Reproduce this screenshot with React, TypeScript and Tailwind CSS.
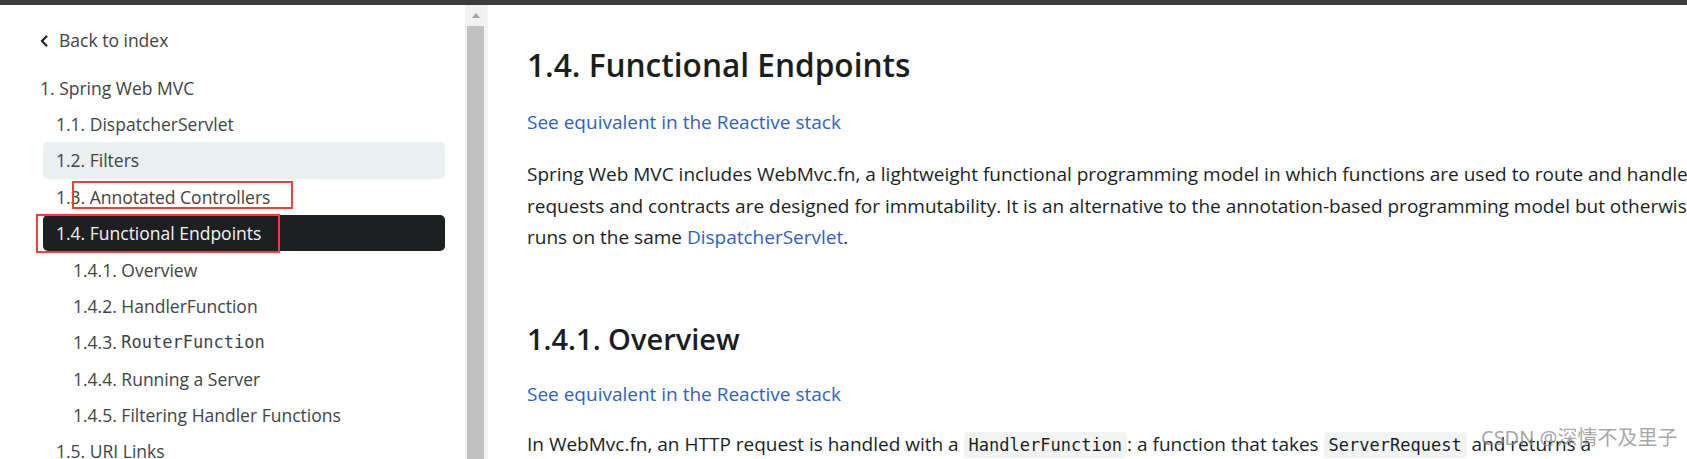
export default function App() {
  const mono = "font-['DejaVu_Sans_Mono',monospace]";
  return (
    <div className="relative w-[1687px] h-[459px] overflow-hidden bg-white font-['Open_Sans',sans-serif] flex flex-col">
      <div className="h-[5px] shrink-0 bg-[#3c3c3c]" />
      <div className="flex flex-1 min-h-0">
        <aside className="w-[465px] shrink-0 pt-[17.5px] text-[17.5px] text-[#3e4444]">
          <div className="h-9 flex items-center pl-[40px] gap-[11px]">
            <svg width="9" height="14" viewBox="0 0 9 14">
              <path d="M7 1.8 L2 7 L7 12.2" fill="none" stroke="#1d2222" strokeWidth="2.2" />
            </svg>
            <span className="-ml-[1px]">Back to index</span>
          </div>
          <div className="mt-[11px] flex flex-col">
            <div className="h-[36.4px] flex items-center pl-[40px]">1. Spring Web MVC</div>
            <div className="h-[36.4px] flex items-center ml-[43px] w-[402px] pl-[13px]">1.1. DispatcherServlet</div>
            <div className="h-[36.4px] flex items-center ml-[43px] w-[402px] pl-[13px] rounded-[5px] bg-[#e8f0f0]">1.2. Filters</div>
            <div className="h-[36.4px] flex items-center ml-[43px] w-[402px] pl-[13px]">1.3. Annotated Controllers</div>
            <div className="h-[36.4px] flex items-center ml-[43px] w-[402px] pl-[13px] rounded-[5px] bg-[#1c2020] text-[#f4f4f4]">1.4. Functional Endpoints</div>
            <div className="h-[36.4px] flex items-center ml-[43px] w-[402px] pl-[30px]">1.4.1. Overview</div>
            <div className="h-[36.4px] flex items-center ml-[43px] w-[402px] pl-[30px]">1.4.2. HandlerFunction</div>
            <div className="h-[36.4px] flex items-center ml-[43px] w-[402px] pl-[30px] whitespace-pre">
              1.4.3. <span className={`${mono} text-[17px]`}>RouterFunction</span>
            </div>
            <div className="h-[36.4px] flex items-center ml-[43px] w-[402px] pl-[30px]">1.4.4. Running a Server</div>
            <div className="h-[36.4px] flex items-center ml-[43px] w-[402px] pl-[30px]">1.4.5. Filtering Handler Functions</div>
            <div className="h-[36.4px] flex items-center ml-[43px] w-[402px] pl-[13px]">1.5. URI Links</div>
          </div>
        </aside>
        <div className="w-[21px] shrink-0 bg-[#f1f1f1] flex flex-col items-center">
          <div className="h-[21px] w-full flex items-center justify-center">
            <div className="w-0 h-0 border-l-[4.5px] border-r-[4.5px] border-b-[5px] border-l-transparent border-r-transparent border-b-[#a3a3a3]" />
          </div>
          <div className="w-[17px] flex-1 bg-[#c1c1c1]" />
        </div>
        <div className="w-[2px] shrink-0 bg-[#eef5f5]" />
        <main className="flex-1 min-w-0 pl-[39px] pt-[40px] text-[19px] text-[#1a1f1f]">
          <h1 className="text-[31.6px] font-semibold leading-[40px] text-[#191e1e]">1.4. Functional Endpoints</h1>
          <div className="mt-[21px] leading-[32px] text-[#2b63c4]">See equivalent in the Reactive stack</div>
          <p className="mt-[21px] leading-[31.5px] whitespace-nowrap">
            Spring Web MVC includes WebMvc.fn, a lightweight functional programming model in which functions are used to route and handle
            <br />
            requests and contracts are designed for immutability. It is an alternative to the annotation-based programming model but otherwise
            <br />
            runs on the same <span className="text-[#2b63c4]">DispatcherServlet</span>.
          </p>
          <h2 className="mt-[67px] text-[29px] font-semibold leading-[36px] text-[#191e1e]">1.4.1. Overview</h2>
          <div className="mt-[21.5px] leading-[32px] text-[#2b63c4]">See equivalent in the Reactive stack</div>
          <p className="mt-[19px] leading-[31.5px] whitespace-nowrap">
            In WebMvc.fn, an HTTP request is handled with a{" "}
            <span className={`${mono} text-[17px] bg-[#f2f4f4] rounded-[4px] px-[5px] py-[3px]`}>HandlerFunction</span>: a function that takes{" "}
            <span className={`${mono} text-[17px] bg-[#f2f4f4] rounded-[4px] px-[5px] py-[3px]`}>ServerRequest</span> and returns a
          </p>
        </main>
      </div>
      <div className="absolute left-[72px] top-[181px] w-[221px] h-[28px] border-2 border-[#f53b3b]" />
      <div className="absolute left-[36px] top-[214px] w-[244px] h-[39px] border-2 border-[#f53b3b]" />
      <div className="absolute left-[1481px] top-[426px] text-[20px] leading-[24px] text-[#8a8a8a]/75 font-['Noto_Sans','Noto_Sans_CJK_SC',sans-serif] whitespace-nowrap">
        CSDN @深情不及里子
      </div>
    </div>
  );
}
